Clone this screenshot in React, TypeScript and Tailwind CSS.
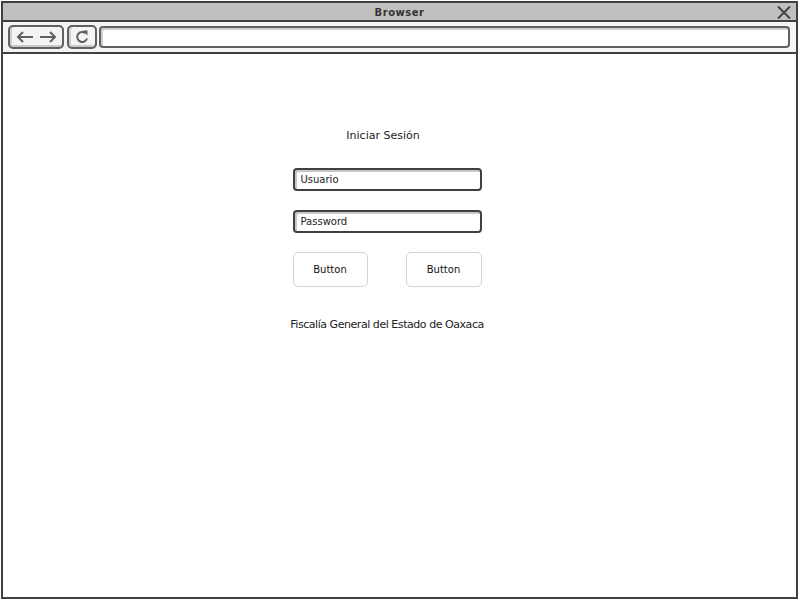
import React from "react";

const font = { fontFamily: '"DejaVu Sans", "Liberation Sans", sans-serif' };

export default function App() {
  return (
    <div className="w-[800px] h-[601px] bg-white relative" style={font}>
      <div className="absolute left-[1px] top-[1px] w-[797px] h-[598px] border-2 border-[#404040] flex flex-col">
        {/* title bar */}
        <div className="h-[19px] bg-[#c0c0c0] border-b-2 border-[#404040] flex items-center justify-center relative shrink-0 pt-[3px]">
          <span className="text-[10px] font-bold text-[#333] tracking-[0.5px] leading-none">Browser</span>
          <svg className="absolute right-[5px] top-[3px]" width="14" height="13" viewBox="0 0 14 13">
            <path d="M1 0.5 L13 12.5 M13 0.5 L1 12.5" stroke="#404040" strokeWidth="2" fill="none" />
          </svg>
        </div>
        {/* toolbar */}
        <div className="h-[32px] bg-[#f4f4f4] border-b-2 border-[#404040] flex items-center px-[5px] gap-[2px] shrink-0">
          <div className="w-[56px] h-[24px] border-2 border-[#606060] rounded-[5px] bg-[#f4f4f4] shadow-[inset_0_-2px_0_#c8c8c8,inset_2px_0_0_#d0d0d0] flex items-center justify-around px-[3px] mr-[1px]">
            <svg width="18" height="12" viewBox="0 0 18 12">
              <path d="M17 6 H2 M7 1 L2 6 L7 11" stroke="#606060" strokeWidth="2" fill="none" />
            </svg>
            <svg width="18" height="12" viewBox="0 0 18 12">
              <path d="M1 6 H16 M11 1 L16 6 L11 11" stroke="#606060" strokeWidth="2" fill="none" />
            </svg>
          </div>
          <div className="w-[30px] h-[24px] border-2 border-[#606060] rounded-[5px] bg-[#f4f4f4] shadow-[inset_0_-2px_0_#c8c8c8,inset_2px_0_0_#d0d0d0] flex items-center justify-center">
            <svg width="14" height="14" viewBox="0 0 14 14">
              <path d="M10.5 3.2 A5 5 0 1 0 12 8.5" stroke="#606060" strokeWidth="2" fill="none" />
              <path d="M8 0.5 L12.5 0.5 L12.5 5.5 Z" fill="#606060" />
            </svg>
          </div>
          <div className="flex-1 h-[22px] border-2 border-[#606060] rounded-[4px] bg-white shadow-[inset_2px_2px_0_#d0d0d0] mr-[1px]" />
        </div>
        {/* content */}
        <div className="flex-1 bg-white flex flex-col items-center pt-[76px] pr-[25px]">
          <div className="text-[11px] text-[#222] leading-none h-[12px] mr-[8px]">Iniciar Sesión</div>
          <div className="mt-[26px] w-[189px] h-[23px] border-2 border-[#404040] rounded-[4px] shadow-[inset_2px_2px_0_#c8c8c8] flex items-center pl-[6px] text-[10px] text-[#222]">
            Usuario
          </div>
          <div className="mt-[19px] w-[189px] h-[23px] border-2 border-[#404040] rounded-[4px] shadow-[inset_2px_2px_0_#c8c8c8] flex items-center pl-[6px] text-[10px] text-[#222]">
            Password
          </div>
          <div className="mt-[19px] w-[189px] flex justify-between">
            <div className="w-[75px] h-[35px] border border-[#d4d4d4] rounded-[5px] flex items-center justify-center text-[10px] text-[#111]">
              Button
            </div>
            <div className="w-[76px] h-[35px] border border-[#d4d4d4] rounded-[5px] flex items-center justify-center text-[10px] text-[#111]">
              Button
            </div>
          </div>
          <div className="mt-[32px] text-[11px] text-[#222] leading-none tracking-[-0.45px]">
            Fiscalía General del Estado de Oaxaca
          </div>
        </div>
      </div>
    </div>
  );
}
